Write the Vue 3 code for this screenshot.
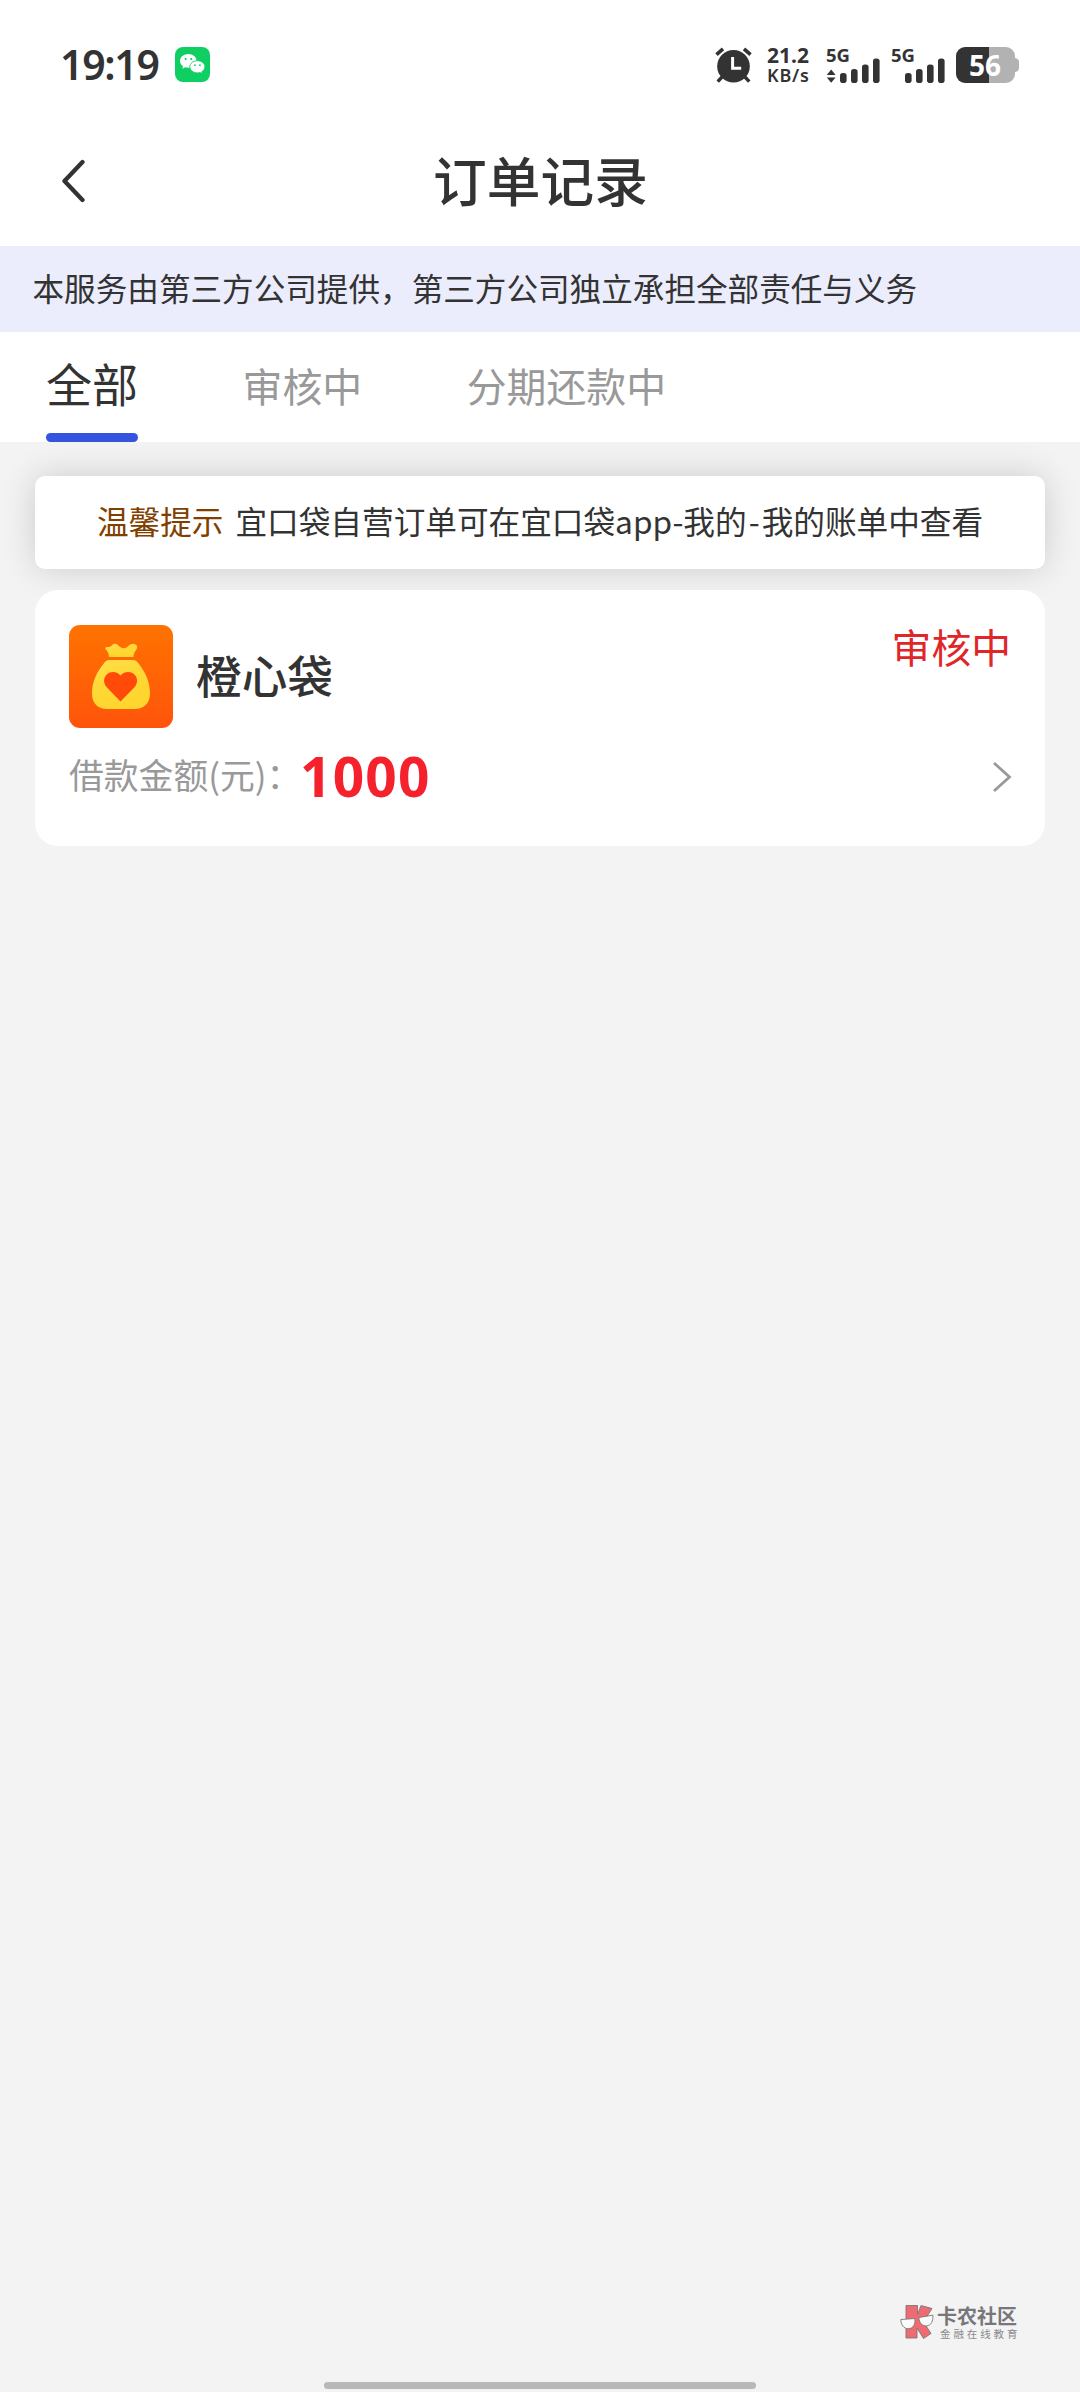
<script setup>
const notice = '本服务由第三方公司提供，第三方公司独立承担全部责任与义务'
const tabs = [
  { label: '全部', active: true },
  { label: '审核中', active: false },
  { label: '分期还款中', active: false },
]
const signals = [{ arrows: true }, { arrows: false }]
const order = { name: '橙心袋', status: '审核中', amount: '1000' }
</script>

<template>
  <div class="page">
    <div class="statusbar">
      <span class="clock">19:19</span>
      <svg class="wechat" viewBox="0 0 35 35">
        <rect width="35" height="35" rx="8" fill="#0fcf63" />
        <path d="M13.3 7C8.700 7 5 10 5 13.900c0 2.200 1.200 4 3 5.300l-.7 2.500 2.900-1.500c1 .3 2 .5 3.100.5 4.600 0 8.300-3 8.300-6.800S17.900 7 13.300 7z" fill="#fff" />
        <path d="M22.400 13.700c-4.200 0-7.600 2.700-7.600 6.100s3.400 6.100 7.600 6.100c.9 0 1.800-.1 2.600-.4l2.400 1.400-.6-2.200c2-1.100 3.100-2.900 3.100-4.900 0-3.400-3.300-6.100-7.500-6.100z" fill="#fff" stroke="#0fcf63" stroke-width=".9" />
        <g fill="#0fcf63">
          <circle cx="10.700" cy="12" r="1.100" /><circle cx="16.200" cy="12" r="1.100" />
          <circle cx="20" cy="18.200" r=".9" /><circle cx="24.900" cy="18.200" r=".9" />
        </g>
      </svg>
      <svg class="alarm" viewBox="0 0 37 36">
        <g stroke="#333" fill="none">
          <path d="M1.500 7.700 8 1.900M35.500 7.700 29 1.900" stroke-width="3.600" />
          <path d="M7.500 29.500 2.700 34.700M29.500 29.500l4.800 5.200" stroke-width="3.400" />
        </g>
        <circle cx="18.500" cy="19.300" r="16.300" fill="#333" />
        <path d="M17.600 10v11.200h8.600" stroke="#fff" stroke-width="3" fill="none" />
      </svg>
      <div class="speed"><b>21.2</b><span>KB/s</span></div>
      <div v-for="(s, i) in signals" :key="i" class="signal">
        <span class="net">5G</span>
        <svg viewBox="0 0 54 36">
          <path v-if="s.arrows" d="M.8 28 5.200 22.600 9.600 28zM.8 30.400h8.800L5.200 35.800z" fill="#333" />
          <g fill="#333">
            <rect x="14" y="26" width="6.600" height="10" rx="2.800" />
            <rect x="25" y="22" width="6.600" height="14" rx="2.800" />
            <rect x="36" y="17.500" width="6.600" height="18.500" rx="2.800" />
            <rect x="47" y="11.500" width="6.600" height="24.500" rx="2.800" />
          </g>
        </svg>
      </div>
      <div class="battery">
        <svg viewBox="0 0 63 36">
          <path d="M9 0H50a9 9 0 0 1 9 9v2c2.600.4 4 1.800 4 4v6c0 2.200-1.400 3.600-4 4v2a9 9 0 0 1-9 9H33V0z" fill="#b2b2b2" />
          <path d="M33 0H9a9 9 0 0 0-9 9v18a9 9 0 0 0 9 9h24z" fill="#333" />
        </svg>
        <span>56</span>
      </div>
    </div>

    <header class="navbar">
      <svg class="back" viewBox="0 0 26 44"><path d="M22.500 3 4.500 22 22.500 41" /></svg>
      <h1>订单记录</h1>
    </header>

    <p class="notice">{{ notice }}</p>

    <nav class="tabs">
      <span v-for="t in tabs" :key="t.label" class="tab" :class="{ active: t.active }">{{ t.label }}</span>
    </nav>

    <main>
      <div class="tip"><em>温馨提示</em><span>宜口袋自营订单可在宜口袋app-我的<i>-</i>我的账单中查看</span></div>

      <section class="card">
        <div class="top">
          <svg class="logo" viewBox="0 0 104 103">
            <defs>
              <linearGradient id="bg" x2="0" y2="1"><stop stop-color="#ff7300" /><stop offset="1" stop-color="#ff540b" /></linearGradient>
              <linearGradient id="bag" x1="0" y1="0" x2=".5" y2="1"><stop stop-color="#ffe04a" /><stop offset=".5" stop-color="#ffd836" /><stop offset="1" stop-color="#ffd52e" /></linearGradient>
            </defs>
            <rect width="104" height="103" rx="11" fill="url(#bg)" />
            <path d="M40 32c0-4-1.500-6-3.200-7.600-1-1.200-.2-2.400 1.400-2.300 2.300.1 3.600-.5 5-2 1.600-1.700 4-1.700 5.800.2 2.500 2.600 6.500 4.500 10 1 2.200-2.400 4.800-3.200 7.200-2 2.200 1.200 2.500 3.300 1.200 5.200-1.800 2.500-3 4.800-3 7.500z" fill="url(#bag)" />
            <path d="M41.500 35h22c2.800 0 4 .8 5.500 2.800 7.500 9.500 12 19 12 31 0 10-6.500 15.200-15 15.200H38c-9 0-15-5.500-15-15.500 0-12 5-22 12.500-31 1.700-2 3-2.500 6-2.500z" fill="url(#bag)" />
            <path d="M51.500 76.500 38.200 62.800C34 58.300 34.200 52.700 38 49.200c3.800-3.400 9.800-3 13.500 1.200 3.700-4.200 10-4.600 13.700-1.200 3.800 3.500 3.900 9.200-.2 13.600z" fill="#ff4a0a" />
          </svg>
          <h2>{{ order.name }}</h2>
          <span class="state">{{ order.status }}</span>
        </div>
        <div class="row">
          <span class="label">借款金额(元)：</span>
          <strong>{{ order.amount }}</strong>
          <svg class="more" viewBox="0 0 20 32"><path d="M2 2 17.500 16 2 30" /></svg>
        </div>
      </section>
    </main>

    <footer>
      <div class="brand">
        <svg viewBox="0 0 34 36">
          <path d="M6 1.500h11.500v9L21 1.500l11 3L23.500 18 31 29.500l-7.500 5L17 24v10H6z" fill="#ef6b72" stroke="#77777b" stroke-width=".9" />
          <path d="M.8 15.500 14.800 14.500c1 6-2 10.200-6.500 10.200S1 21 .8 15.500zM18.800 13.500l14-2.300c.6 6-1.800 10.200-6.100 10.700-4.200.4-7.500-3-7.900-8.400z" fill="#fafafa" stroke="#77777b" stroke-width=".9" />
        </svg>
        <div class="words"><b>卡农社区</b><span>金融在线教育</span></div>
      </div>
      <div class="home"></div>
    </footer>
  </div>
</template>

<style>
body { background: #f3f3f3; }
</style>

<style scoped>
.page {
  display: flex; flex-direction: column;
  width: 1080px; height: 2392px; overflow: hidden;
  background: #f3f3f3; color: #333;
  font-family: "Noto Sans CJK SC", sans-serif;
}
h1, h2, p { margin: 0; font-weight: 400; }
svg { display: block; flex: none; }
.statusbar { display: flex; align-items: flex-start; height: 83px; padding: 47px 60px 0 60px; box-sizing: border-box; flex: none; background: #fff; }
.clock { width: 115px; font: 600 41px/35px "Noto Sans", sans-serif; letter-spacing: -1.300px; white-space: nowrap; }
.wechat { width: 35px; height: 35px; }
.alarm { width: 37px; height: 36px; margin-left: 505px; }
.speed { display: flex; flex-direction: column; width: 59px; margin-left: 15px; font-family: "Noto Sans", sans-serif; }
.speed b { font-size: 21px; line-height: 16px; font-weight: 700; letter-spacing: 0; }
.speed span { font-size: 18px; line-height: 18px; font-weight: 600; margin-top: 3px; letter-spacing: .8px; }
.signal { position: relative; width: 54px; margin-right: 11px; }
.signal svg { width: 54px; height: 36px; }
.net { position: absolute; left: 0; top: 0; font: 700 18.500px/15px "Noto Sans", sans-serif; }
.battery { position: relative; }
.battery svg { width: 63px; height: 36px; }
.battery span { position: absolute; left: 0; top: 0; width: 58px; text-align: center; color: #fff; font: 700 28px/36px "Noto Sans", sans-serif; }
.navbar { display: flex; align-items: flex-start; height: 163px; padding: 0 60px; flex: none; background: #fff; box-sizing: border-box; }
.back { width: 26px; height: 44px; margin-top: 76px; }
.back path { fill: none; stroke: #333; stroke-width: 4.300; stroke-linecap: round; stroke-linejoin: round; }
h1 { flex: 1; margin-right: 25px; text-align: center; font-size: 53.700px; line-height: 80px; font-weight: 500; margin-top: 56px; }
.notice { height: 86px; line-height: 83px; padding-left: 32.500px; box-sizing: border-box; flex: none; background: #ebedfc; font-size: 31.600px; white-space: nowrap; }
.tabs { display: flex; height: 110px; padding-left: 46px; gap: 104.500px; flex: none; background: #fff; font-size: 39.900px; line-height: 105px; color: #999; }
.tab { position: relative; white-space: nowrap; }
.active { font-size: 46px; color: #333; line-height: 101px; }
.active::after { content: ""; position: absolute; left: 0; right: 0; bottom: 0; height: 9px; border-radius: 4.500px; background: #3553df; }
main { display: flex; flex-direction: column; gap: 21px; padding: 34px 35px 0; }
.tip { display: flex; align-items: center; justify-content: center; gap: 12px; height: 93px; padding-bottom: 6px; box-sizing: border-box; border-radius: 10px; background: #fff; box-shadow: 0 0 34px rgba(0, 0, 0, .16); font-size: 31.650px; white-space: nowrap; }
.tip em { font-style: normal; color: #804000; }
.tip i { font-style: normal; padding: 0 2px; }
.card { position: relative; height: 256px; padding: 35px 34px 0; box-sizing: border-box; border-radius: 23px; background: #fff; }
.top { display: flex; height: 103px; }
.logo { width: 104px; height: 103px; }
h2 { margin-left: 23px; font-size: 45.700px; line-height: 98px; font-weight: 500; }
.state { margin-left: auto; font-size: 39.800px; line-height: 41px; color: #df2629; }
.row { display: flex; align-items: center; height: 98px; }
.label { width: 231px; font-size: 34.800px; line-height: 50px; padding-bottom: 6px; color: #999; white-space: nowrap; }
strong { font: 700 55px/60px "Noto Sans", sans-serif; letter-spacing: 1.200px; color: #f5222d; padding-bottom: 3px; }
.more { width: 20px; height: 32px; margin-left: auto; margin-right: -1px; }
.more path { fill: none; stroke: #999; stroke-width: 2.8; }
footer { display: flex; flex-direction: column; margin-top: auto; padding-bottom: 3px; }
.brand { display: flex; align-self: flex-end; height: 36px; margin: 0 60px 42px 0; color: #77777b; }
.brand svg { width: 34px; height: 36px; }
.words { display: flex; flex-direction: column; width: 83px; margin-left: 3px; white-space: nowrap; }
.words b { font-size: 20px; line-height: 24px; font-weight: 700; }
.words span { margin-left: 3px; font-size: 10.500px; line-height: 11px; letter-spacing: 2.900px; color: #8a8a8d; }
.home { align-self: center; width: 432px; height: 7px; border-radius: 4px; background: #b8b8b8; }
</style>
